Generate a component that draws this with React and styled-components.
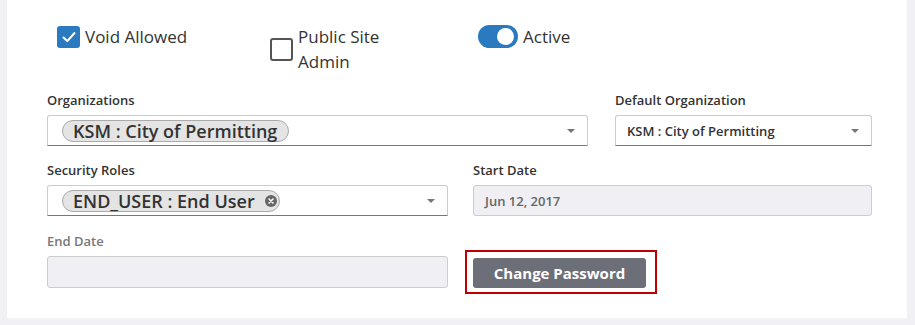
import React from 'react'
import styled, { createGlobalStyle } from 'styled-components';

const GlobalStyle = createGlobalStyle`
  body {
    margin: 0;
    background: #f0f0f5;
    font-family: "Open Sans", "Liberation Sans", sans-serif;
    color: #333;
  }
`;

export default function App() {
  return (
    <Page>
      <GlobalStyle />
      <Panel>
        <Options>
          <Check>
            <Box checked>
              <svg width="16" height="16" viewBox="0 0 16 16">
                <path d="M2.5 8.5l3.8 3.6L13.5 4" fill="none" stroke="#fff" strokeWidth="2" strokeLinecap="round" strokeLinejoin="round" />
              </svg>
            </Box>
            <CheckText>Void Allowed</CheckText>
          </Check>
          <Check>
            <Box />
            <CheckText narrow>Public Site Admin</CheckText>
          </Check>
          <Check>
            <Toggle><Knob /></Toggle>
            <CheckText>Active</CheckText>
          </Check>
        </Options>

        <Row cols="541px 257px">
          <Field>
            <Label>Organizations</Label>
            <Select>
              <Tag>KSM : City of Permitting</Tag>
              <Caret />
            </Select>
          </Field>
          <Field>
            <Label>Default Organization</Label>
            <Select>
              <Value>KSM : City of Permitting</Value>
              <Caret />
            </Select>
          </Field>
        </Row>

        <Row cols="401px 399px">
          <Field>
            <Label>Security Roles</Label>
            <Select>
              <Tag closable>
                END_USER : End User
                <svg width="12" height="12" viewBox="0 0 12 12">
                  <circle cx="6" cy="6" r="6" fill="#666" />
                  <path d="M4 4l4 4M8 4l-4 4" stroke="#fff" strokeWidth="1.6" strokeLinecap="round" />
                </svg>
              </Tag>
              <Caret />
            </Select>
          </Field>
          <Field>
            <Label>Start Date</Label>
            <Input>Jun 12, 2017</Input>
          </Field>
        </Row>

        <Row cols="401px 399px" spaced>
          <Field>
            <Label muted>End Date</Label>
            <Input tall />
          </Field>
          <ButtonCell>
            <Highlight>
              <Button>Change Password</Button>
            </Highlight>
          </ButtonCell>
        </Row>
      </Panel>
    </Page>
  )
}

const Page = styled.div`
  padding: 0 8px 7px 7px;
`;

const Panel = styled.div`
  background: #fff;
  padding: 24px 35px 30px 40px;
  display: flex;
  flex-direction: column;
  gap: 15px;
`;

const Options = styled.div`
  display: grid;
  grid-template-columns: 213px 208px auto;
  padding-left: 10px;
  padding-bottom: 2px;
  align-items: start;
`;

const Check = styled.label`
  display: flex;
  align-items: center;
  gap: 5px;
`;

const Box = styled.span`
  width: ${p => p.checked ? '23px' : '19px'};
  height: ${p => p.checked ? '22px' : '19px'};
  border-radius: 3px;
  flex-shrink: 0;
  display: flex;
  align-items: center;
  justify-content: center;
  background: ${p => p.checked ? '#2a7abf' : '#fff'};
  border: ${p => p.checked ? 'none' : '2px solid #555'};
`;

const CheckText = styled.span`
  font-size: 17px;
  line-height: 25px;
  color: #333;
  max-width: ${p => p.narrow ? '110px' : 'none'};
`;

const Toggle = styled.span`
  width: 40px;
  height: 23px;
  border-radius: 12px;
  background: #2a7abf;
  display: flex;
  align-items: center;
  justify-content: flex-end;
  padding-right: 4px;
  box-sizing: border-box;
`;

const Knob = styled.span`
  width: 17px;
  height: 17px;
  border-radius: 50%;
  background: #fff;
`;

const Row = styled.div`
  display: grid;
  grid-template-columns: ${p => p.cols};
  justify-content: space-between;
  margin-top: ${p => p.spaced ? '1px' : '0'};
`;

const Field = styled.div`
  display: flex;
  flex-direction: column;
  gap: 6px;
`;

const Label = styled.div`
  font-size: 13px;
  font-weight: 600;
  line-height: 18px;
  color: ${p => p.muted ? '#777' : '#333'};
`;

const Select = styled.div`
  height: 31px;
  box-sizing: border-box;
  border: 1px solid #ccc;
  border-bottom-color: #777;
  border-radius: 3px 3px 0 0;
  display: flex;
  align-items: center;
  padding: 0 12px 0 11px;
`;

const Tag = styled.span`
  display: inline-flex;
  align-items: center;
  gap: 10px;
  height: 22px;
  box-sizing: border-box;
  padding: 0 ${p => p.closable ? '2px' : '11px'} 0 10px;
  margin-left: 3px;
  border: 1px solid #aaa;
  border-radius: 11px;
  background: #e4e4e4;
  font-size: 18px;
  font-weight: 600;
  color: #333;
  white-space: nowrap;
`;

const Value = styled.span`
  font-size: 13px;
  font-weight: 600;
  color: #333;
`;

const Caret = styled.span`
  margin-left: auto;
  width: 0;
  height: 0;
  border-left: 4.5px solid transparent;
  border-right: 4.5px solid transparent;
  border-top: 4.5px solid #777;
`;

const Input = styled.div`
  height: ${p => p.tall ? '32px' : '31px'};
  box-sizing: border-box;
  background: #f0f0f4;
  border: 1px solid #ccc;
  border-radius: 3px;
  padding: 0 11px;
  display: flex;
  align-items: center;
  font-size: 13px;
  font-weight: 600;
  color: #666;
`;

const ButtonCell = styled.div`
  display: flex;
  align-items: flex-end;
`;

const Highlight = styled.div`
  position: relative;
  &::after {
    content: '';
    position: absolute;
    top: -8px;
    left: -8px;
    right: -11px;
    bottom: -6px;
    border: 2px solid #c00000;
    pointer-events: none;
  }
`;

const Button = styled.button`
  width: 173px;
  height: 30px;
  border: none;
  border-radius: 3px;
  background: #6c6e78;
  color: #fff;
  font-family: "Open Sans", "Liberation Sans", sans-serif;
  font-size: 15px;
  font-weight: 700;
  cursor: pointer;
`;
